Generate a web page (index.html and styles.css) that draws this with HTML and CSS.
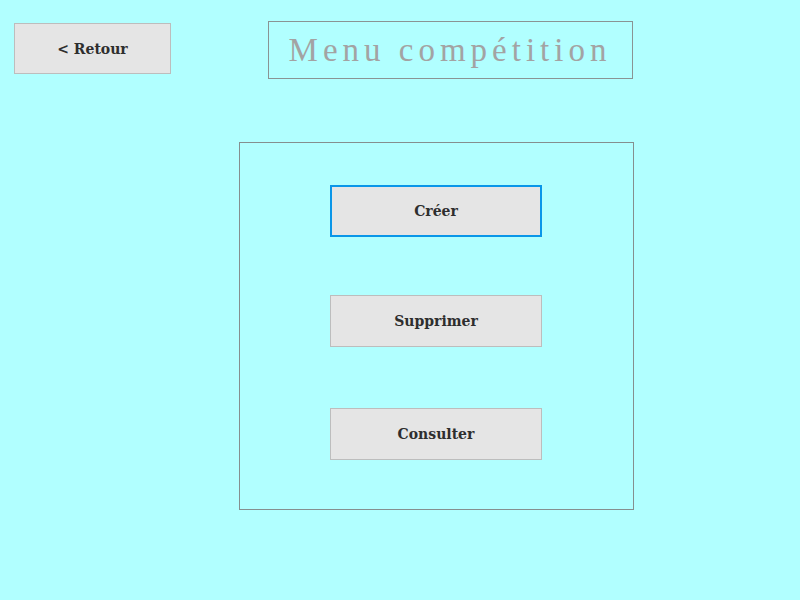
FILE: index.html
```html
<!DOCTYPE html>
<html lang="fr">
<head>
<meta charset="utf-8">
<title>Menu compétition</title>
<link rel="stylesheet" href="styles.css">
</head>
<body>
<div class="screen">
  <header class="top">
    <button class="btn back">&lt; Retour</button>
    <h1 class="title">Menu compétition</h1>
  </header>
  <main class="panel">
    <button class="btn action focused">Créer</button>
    <button class="btn action">Supprimer</button>
    <button class="btn action">Consulter</button>
  </main>
</div>
</body>
</html>
```
FILE: styles.css
```css
html, body {
  margin: 0;
  padding: 0;
  background: #b1ffff;
}
.screen {
  width: 800px;
  height: 600px;
}
.top {
  display: flex;
  align-items: flex-start;
  padding: 21px 0 0 14px;
  height: 142px;
  box-sizing: border-box;
}
.btn {
  font-family: "DejaVu Serif", serif;
  font-weight: bold;
  font-size: 14px;
  color: #2e2e2e;
  background: #e5e5e5;
  border: 1px solid #bdbdbd;
  margin: 0;
  padding: 0;
  box-sizing: border-box;
}
.back {
  width: 157px;
  height: 51px;
  margin-top: 2px;
}
.title {
  margin: 0 0 0 97px;
  width: 365px;
  height: 58px;
  box-sizing: border-box;
  border: 1px solid #8a9494;
  font-family: "Liberation Serif", serif;
  font-weight: normal;
  font-size: 33px;
  letter-spacing: 5px;
  padding-right: 1px;
  color: #a3a3a3;
  text-align: center;
  line-height: 56px;
}
.panel {
  margin-left: 239px;
  width: 395px;
  height: 368px;
  box-sizing: border-box;
  border: 1px solid #858f8f;
  display: flex;
  flex-direction: column;
  align-items: center;
  padding-top: 42px;
  gap: 58px;
}
.action {
  width: 212px;
  height: 52px;
  margin-left: -1px;
}
.panel .action:nth-child(3) { margin-top: 3px; }
.focused {
  border: 2px solid #0a96e8;
}
```
